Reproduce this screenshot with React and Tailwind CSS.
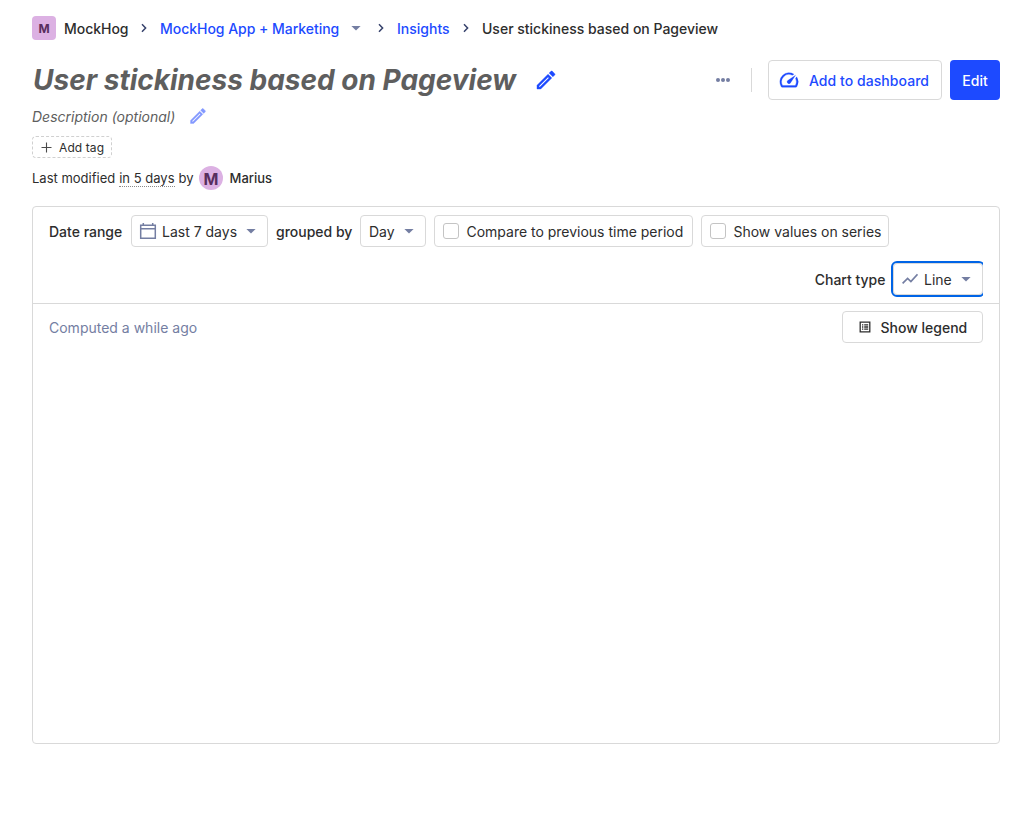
import React from "react";

const Chevron = ({ className = "" }) => (
  <svg className={"h-4 w-4 shrink-0 " + className} viewBox="0 0 16 16" fill="none" stroke="#35416b" strokeWidth="1.5">
    <path d="M6 4.3 9.6 8 6 11.7" />
  </svg>
);

const Caret = ({ className = "" }) => (
  <svg className={"h-4 w-4 shrink-0 " + className} viewBox="0 0 16 16" fill="#747ea2">
    <path d="M3.4 6h9.2L8 10.4z" />
  </svg>
);

const Pencil = ({ className }) => (
  <svg className={className} viewBox="0 0 24 24" fill="currentColor" stroke="currentColor" strokeWidth="0.4">
    <path d="m14.06 9.02.92.92L5.92 19H5v-.92l9.06-9.06M17.66 3c-.25 0-.51.1-.7.29l-1.83 1.83 3.75 3.75 1.83-1.83a.996.996 0 0 0 0-1.41l-2.34-2.34c-.2-.2-.45-.29-.71-.29zm-3.6 3.19L3 17.25V21h3.75L17.81 9.94l-3.75-3.75z" />
  </svg>
);

const box = "flex h-8 shrink-0 items-center rounded border border-[#d9d9d9] bg-white";

const Check = ({ label, width }) => (
  <label className={`${box} ${width} pl-2`}>
    <span className="mr-[7.5px] h-4 w-4 shrink-0 rounded-[3px] border border-[#c4c4c4]" />
    <span className="tracking-[-0.01px]">{label}</span>
  </label>
);

export default function App() {
  return (
    <div className="h-[824px] w-[1032px] overflow-hidden bg-white px-8 pt-4 font-['Inter',sans-serif] text-[14px] whitespace-nowrap text-[#2d2d2d]">
      <nav className="flex h-6 items-center font-medium">
        <span className="mr-2 flex h-6 w-6 items-center justify-center rounded bg-[#dcb1e3] pt-px text-[12px] font-bold text-[#572e5e]">M</span>
        <span className="w-16 tracking-[-0.03px]">MockHog</span>
        <Chevron className="mx-2" />
        <a className="w-[180px] tracking-[-0.03px] text-[#1d4aff]">MockHog App + Marketing</a>
        <Caret className="mr-[9px] ml-2" />
        <Chevron className="mr-2" />
        <a className="w-[53px] text-[#1d4aff]">Insights</a>
        <Chevron className="mx-2" />
        <span>User stickiness based on Pageview</span>
      </nav>

      <header className="mt-5 flex h-10 items-center">
        <h1 className="w-[502px] pl-px text-[28px] font-bold text-[#5e5e5e] italic">User stickiness based on Pageview</h1>
        <Pencil className="mb-px h-6 w-6 text-[#1d4aff]" />
        <svg className="ml-auto h-4 w-4" viewBox="0 0 16 16" fill="#747ea2">
          <circle cx="3" cy="8" r="2" />
          <circle cx="8" cy="8" r="2" />
          <circle cx="13" cy="8" r="2" />
        </svg>
        <span className="mr-4 ml-5 h-6 w-px bg-[#d9d9d9]" />
        <button className="flex h-10 w-[174px] items-center rounded border border-[#d9d9d9] pl-[9px] font-medium text-[#1d4aff]">
          <svg className="mr-[9px] h-[22px] w-[22px] shrink-0" viewBox="0 0 24 24" fill="currentColor" stroke="currentColor" strokeWidth="0.3">
            <path d="m20.38 8.57-1.23 1.85a8 8 0 0 1-.22 7.58H5.07A8 8 0 0 1 15.58 6.85l1.85-1.23A10 10 0 0 0 3.35 19a2 2 0 0 0 1.72 1h13.85a2 2 0 0 0 1.74-1 10 10 0 0 0-.27-10.44zm-9.79 6.84a2 2 0 0 0 2.83 0l5.66-8.49-8.49 5.66a2 2 0 0 0 0 2.83z" />
          </svg>
          <span className="pt-px tracking-[0.05px]">Add to dashboard</span>
        </button>
        <button className="ml-2 h-10 w-[50px] rounded bg-[#1d4aff] text-[14px] font-medium text-white">Edit</button>
      </header>

      <div className="mt-[5px] flex h-[22px] items-center">
        <span className="w-[156px] text-[#5e5e5e] italic">Description (optional)</span>
        <Pencil className="h-5 w-5 text-[#8298ff]" />
      </div>

      <div className="mt-[9px] flex h-[22px] w-20 items-center rounded border border-dashed border-[#d0d0d0] pl-2 text-[12px]">
        <svg className="mr-[7px] h-[11px] w-[11px]" viewBox="0 0 11 11" stroke="#4a4a4a" strokeWidth="1.1">
          <path d="M5.5.5v10M.5 5.5h10" />
        </svg>
        <span className="pt-px tracking-[0.1px]">Add tag</span>
      </div>

      <div className="mt-2 flex h-6 items-center text-[13px]">
        <span className="mt-px mr-1">Last modified</span>
        <span className="mt-0.5 mr-1 border-b border-dotted border-[#8a8a8a] leading-[15px]">in 5 days</span>
        <span className="mt-px">by</span>
        <span className="mr-1.5 ml-[5px] flex h-6 w-6 items-center justify-center rounded-full bg-[#dcb1e3] pt-px pl-px text-[16px] font-bold text-[#572e5e]">M</span>
        <span className="mt-px pl-px font-medium">Marius</span>
      </div>

      <main className="mt-4 h-[538px] rounded border border-[#d9d9d9]">
        <section className="h-[97px] border-b border-[#d9d9d9] px-4 pt-2">
          <div className="flex h-8 items-center gap-2">
            <span className="w-[74px] font-medium">Date range</span>
            <button className={`${box} w-[137px] pl-[7px]`}>
              <svg className="mr-[5px] h-[18px] w-[18px] shrink-0" viewBox="0 0 18 18" fill="none" stroke="#747ea2" strokeWidth="1.5">
                <path d="M1.7 3.2h14.6v13.1H1.7zM1.7 6.7h14.6M4.3 1v2M13.7 1v2" />
              </svg>
              <span>Last 7 days</span>
              <Caret className="mr-2 ml-auto" />
            </button>
            <span className="w-[76px] font-medium">grouped by</span>
            <button className={`${box} w-[66px] pl-2`}>
              <span>Day</span>
              <Caret className="mr-2 ml-auto" />
            </button>
            <Check label="Compare to previous time period" width="w-[259px]" />
            <Check label="Show values on series" width="w-[188px]" />
          </div>
          <div className="mt-3 flex h-10 items-center justify-end overflow-hidden">
            <span className="mr-[7.5px] font-medium">Chart type</span>
            <button className={`${box} w-[90px] pl-2 outline-2 outline-[#0064e6]`}>
              <svg className="mr-1.5 h-4 w-4 shrink-0" viewBox="0 0 16 16" fill="none" stroke="#747ea2" strokeWidth="1.7">
                <path d="m.6 12.4 5-5 3.3 3.2L15.5 3.3" />
              </svg>
              <span>Line</span>
              <Caret className="mr-2 ml-auto" />
            </button>
          </div>
        </section>
        <section className="flex items-center justify-between px-4 pt-[7px]">
          <span className="text-[#747ea2]">Computed a while ago</span>
          <button className={`${box} w-[141px] pl-[15px] font-medium`}>
            <svg className="mr-[8.5px] h-[14px] w-[14px] shrink-0" viewBox="0 0 14 14" fill="none" stroke="#2d2d2d" strokeWidth="1.3">
              <path d="M2.2 2.2h9.6v9.6H2.2zM4 4.8h1.3M6.2 4.8h4M4 7h1.3M6.2 7h4M4 9.2h1.3M6.2 9.2h4" />
            </svg>
            <span>Show legend</span>
          </button>
        </section>
      </main>
    </div>
  );
}
